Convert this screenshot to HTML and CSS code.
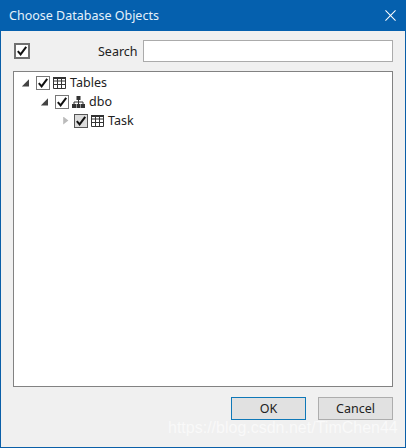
FILE: index.html
```html
<!DOCTYPE html>
<html>
<head>
  <meta charset="UTF-8" />
  <title>Choose Database Objects</title>
  <link rel="stylesheet" href="styles.css">
</head>
<body>

<svg class="defs" width="0" height="0">
  <symbol id="tick" viewBox="0 0 12 12">
    <path d="M1.8 6.2 L4.6 9.4 L10.2 1.8" fill="none" stroke="#111" stroke-width="2" />
  </symbol>
  <symbol id="grid" viewBox="0 0 13 12">
    <path d="M0.5 0.5H12.5V11.5H0.5Z M0.5 4H12.5 M0.5 7.5H12.5 M4.5 0.5V11.5 M8.5 0.5V11.5" fill="none" stroke="#333" />
    <path d="M0 0H13V2H0Z" fill="#333" />
  </symbol>
</svg>

<div class="dialog">
  <div class="titlebar">
    <span class="title">Choose Database Objects</span>
    <svg class="close" width="11" height="11" viewBox="0 0 12 12">
      <path d="M0.5 0.5 L11.5 11.5 M11.5 0.5 L0.5 11.5" stroke="#fff" stroke-width="1.1" />
    </svg>
  </div>

  <div class="content">
    <div class="searchrow">
      <span class="check check-big"><svg width="12" height="12"><use href="#tick" /></svg></span>
      <label class="searchlabel">Search</label>
      <input class="searchinput" type="text" />
    </div>

    <div class="tree">
      <div class="node">
        <span class="arrow arrow-open"></span>
        <span class="check"><svg width="12" height="12"><use href="#tick" /></svg></span>
        <svg class="icon" width="13" height="12"><use href="#grid" /></svg>
        <span>Tables</span>
      </div>
      <div class="node level1">
        <span class="arrow arrow-open"></span>
        <span class="check"><svg width="12" height="12"><use href="#tick" /></svg></span>
        <svg class="icon" width="13" height="12" viewBox="0 0 13 12">
          <path d="M4.5 0H8.5V4H4.5Z M0 8H4V12H0Z M4.5 8H8.5V12H4.5Z M9 8H13V12H9Z" fill="#333" />
          <path d="M6.5 4V8 M2 8V6H11V8" fill="none" stroke="#333" />
        </svg>
        <span>dbo</span>
      </div>
      <div class="node level2">
        <span class="arrow arrow-closed"></span>
        <span class="check check-hover"><svg width="12" height="12"><use href="#tick" /></svg></span>
        <svg class="icon" width="13" height="12"><use href="#grid" /></svg>
        <span>Task</span>
      </div>
    </div>

    <div class="buttons">
      <button class="btn btn-default">OK</button>
      <button class="btn">Cancel</button>
    </div>
  </div>
</div>

<div class="watermark">https://blog.csdn.net/TimChen44</div>

</body>
</html>
```

FILE: styles.css
```css
html, body { margin: 0; padding: 0; }
body {
  width: 406px;
  height: 448px;
  overflow: hidden;
  position: relative;
  font-family: "Noto Sans", "Open Sans", sans-serif;
  font-size: 12.5px;
  color: #222;
}
.defs { position: absolute; }

.dialog {
  width: 406px;
  height: 448px;
  box-sizing: border-box;
  display: flex;
  flex-direction: column;
  border: 1px solid #0a5fa8;
  border-top: 0;
  background: #f0f0f0;
}
.titlebar {
  height: 31px;
  box-sizing: border-box;
  flex: none;
  margin: 0 -1px;
  padding: 0 10px 1px 9px;
  display: flex;
  align-items: center;
  justify-content: space-between;
  background: #0560ae;
  color: #e4f1fb;
}
.title { font-size: 12.5px; }

.content {
  flex: 1;
  display: flex;
  flex-direction: column;
  padding: 9px 12px 0 12px;
}
.searchrow {
  display: flex;
  align-items: center;
  height: 22px;
}
.check {
  width: 12px;
  height: 12px;
  flex: none;
  display: flex;
  align-items: center;
  justify-content: center;
  border: 1px solid #777;
  background: #fff;
}
.check-big {
  margin-left: 1px;
  border: 2px solid #707070;
}
.check-hover { background: #dcdcdc; border-color: #555; }
.searchlabel { margin-left: 68px; width: 45px; }
.searchinput {
  width: 250px;
  height: 22px;
  box-sizing: border-box;
  margin: 0;
  border: 1px solid #ababab;
  background: #fff;
  outline: 0;
}

.tree {
  height: 316px;
  box-sizing: border-box;
  margin-top: 9px;
  padding-top: 1px;
  border: 1px solid #828282;
  background: #fff;
}
.node {
  display: flex;
  align-items: center;
  height: 19px;
  padding-left: 7px;
}
.level1 { padding-left: 26px; }
.level2 { padding-left: 45px; }
.arrow {
  width: 8px;
  height: 8px;
  flex: none;
  margin-right: 7px;
}
.arrow-open {
  background: #444;
  clip-path: polygon(100% 10%, 100% 100%, 10% 100%);
}
.arrow-closed {
  margin-left: 3px;
  margin-right: 4px;
  background: #bbb;
  clip-path: polygon(15% 0, 80% 50%, 15% 100%);
}
.icon { flex: none; margin: 0 4px 0 3px; }

.buttons {
  display: flex;
  justify-content: flex-end;
  gap: 12px;
  margin-top: 10px;
}
.btn {
  width: 75px;
  height: 23px;
  padding: 0;
  font: inherit;
  color: #222;
  border: 1px solid #adadad;
  background: #e1e1e1;
}
.btn-default { border-color: #0f78b8; }

.watermark {
  position: absolute;
  left: 168px;
  top: 419px;
  font-size: 16px;
  color: #fff;
  opacity: 0.6;
  white-space: nowrap;
  font-family: "Liberation Sans", sans-serif;
}
```
